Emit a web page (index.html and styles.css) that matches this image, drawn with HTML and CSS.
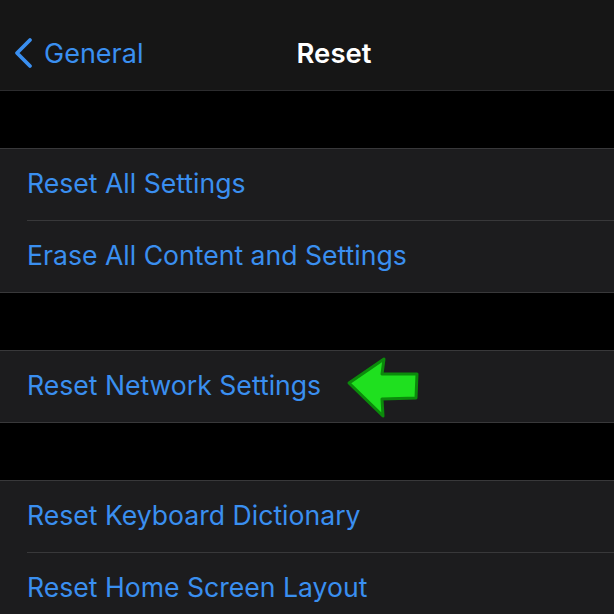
FILE: index.html
```html
<!DOCTYPE html>
<html lang="en">
<head>
    <meta charset="UTF-8">
    <meta name="viewport" content="width=device-width, initial-scale=1.0">
    <title>Reset</title>
    <link rel="stylesheet" href="styles.css">
</head>
<body>
    <div class="screen">
        <div class="nav-bar">
            <a href="#" class="nav-back">
                <svg class="chevron" width="22" height="32" viewBox="0 0 22 32">
                    <path d="M18 3 L5 16 L18 29" fill="none" stroke="#3a8ff0" stroke-width="3.8" stroke-linecap="round" stroke-linejoin="round"/>
                </svg>
                <span>General</span>
            </a>
            <div class="nav-title">Reset</div>
        </div>

        <div class="group-gap"></div>
        <div class="group">
            <div class="row">Reset All Settings</div>
            <div class="row">Erase All Content and Settings</div>
        </div>

        <div class="group-gap"></div>
        <div class="group">
            <div class="row">
                Reset Network Settings
                <svg class="pointer" width="80" height="66" viewBox="0 0 80 66">
                    <polygon points="6,28 41,4 39,19 74,19 73,43 39,44 40,61" fill="#1fe01f" stroke="#0b8a0b" stroke-width="3" stroke-linejoin="round"/>
                </svg>
            </div>
        </div>

        <div class="group-gap"></div>
        <div class="group">
            <div class="row">Reset Keyboard Dictionary</div>
            <div class="row">Reset Home Screen Layout</div>
        </div>
    </div>
</body>
</html>
```

FILE: styles.css
```css
body {
    margin: 0;
    background: #000;
    font-family: Inter, "Noto Sans", sans-serif;
    overflow: hidden;
}

.screen {
    width: 614px;
    height: 614px;
    overflow: hidden;
}

.nav-bar {
    position: relative;
    height: 90px;
    background: #161616;
    border-bottom: 1px solid #2c2c2e;
    display: flex;
    align-items: center;
}

.nav-back {
    display: flex;
    align-items: center;
    gap: 10px;
    margin-left: 12px;
    margin-top: 16px;
    color: #3a8ff0;
    text-decoration: none;
    font-size: 27px;
}

.chevron {
    display: block;
}

.nav-title {
    position: absolute;
    left: 296px;
    top: 8px;
    height: 90px;
    width: 76px;
    display: flex;
    align-items: center;
    justify-content: center;
    color: #fff;
    font-size: 27.5px;
    font-weight: 600;
}

.group-gap {
    height: 57px;
}

.group {
    background: #1c1c1e;
    border-top: 1px solid #38383a;
    border-bottom: 1px solid #38383a;
}

.row {
    position: relative;
    box-sizing: border-box;
    height: 71px;
    padding-bottom: 3px;
    margin-left: 27px;
    display: flex;
    align-items: center;
    color: #3a8ff0;
    font-size: 26.6px;
}

.row + .row {
    height: 72px;
    border-top: 1px solid #38383a;
}

.pointer {
    position: absolute;
    left: 316px;
    top: 4px;
}
```
